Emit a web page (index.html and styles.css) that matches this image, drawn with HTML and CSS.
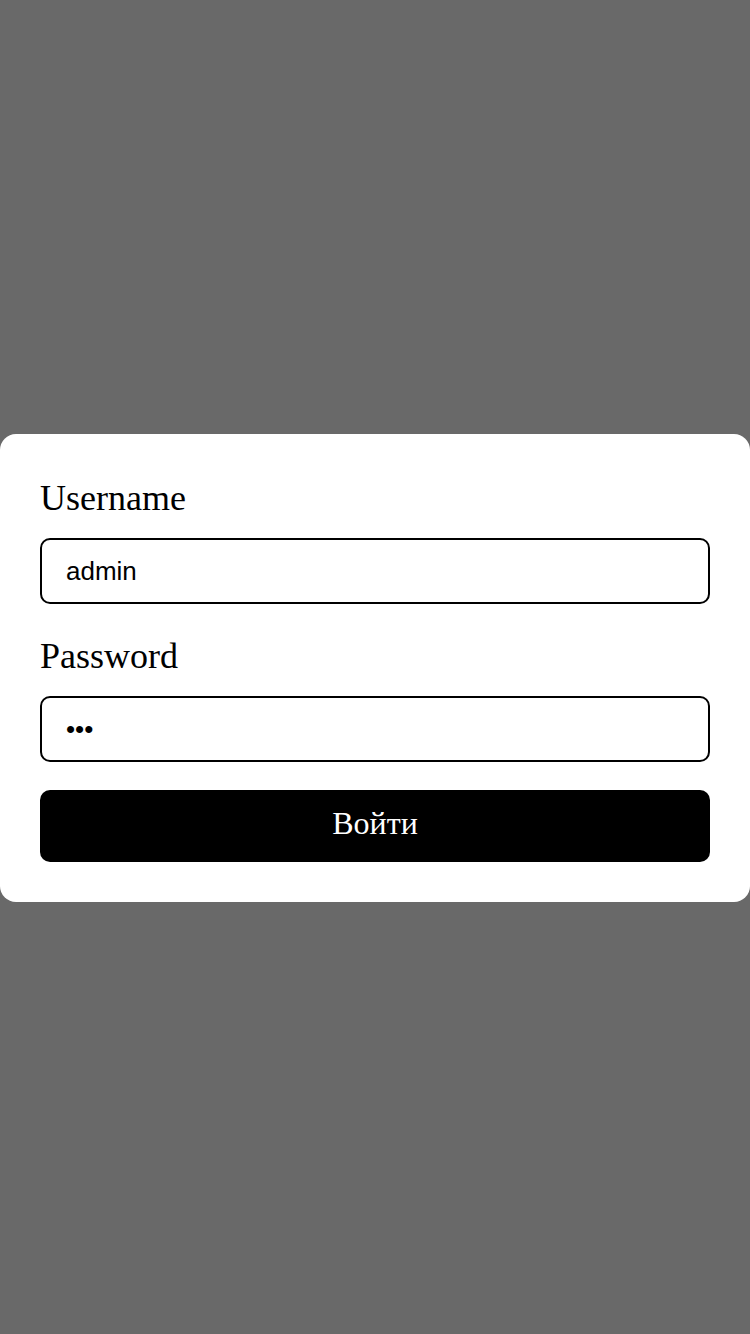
FILE: index.html
```html
<!DOCTYPE html>
<html lang="ru">
<head>
<meta charset="utf-8">
<title>Login</title>
<link rel="stylesheet" href="styles.css">
</head>
<body>
<div class="screen">
  <form class="card">
    <label class="label" for="u">Username</label>
    <input class="field" id="u" type="text" value="admin">
    <label class="label label-second" for="p">Password</label>
    <input class="field" id="p" type="password" value="123">
    <button class="btn" type="button">Войти</button>
  </form>
</div>
</body>
</html>
```

FILE: styles.css
```css
html, body {
  margin: 0;
  padding: 0;
  height: 100%;
}
body {
  background: #696969;
  font-family: "Liberation Serif", "Times New Roman", serif;
}
.screen {
  box-sizing: border-box;
  height: 1334px;
  padding-top: 2px;
  display: flex;
  align-items: center;
}
.card {
  box-sizing: border-box;
  width: 750px;
  background: #fff;
  border-radius: 16px;
  padding: 44px 40px 40px;
  display: flex;
  flex-direction: column;
}
.label {
  font-size: 36px;
  line-height: 40px;
  color: #000;
  margin-bottom: 20px;
}
.label-second {
  margin-top: 32px;
}
.field {
  box-sizing: border-box;
  height: 66px;
  width: 100%;
  border: 2px solid #000;
  border-radius: 10px;
  padding: 0 24px;
  font-family: "Liberation Sans", Arial, sans-serif;
  font-size: 26px;
  color: #000;
  background: #fff;
  outline: none;
}
.btn {
  margin-top: 28px;
  height: 72px;
  width: 100%;
  border: none;
  border-radius: 10px;
  background: #000;
  color: #fff;
  font-family: "Liberation Serif", "Times New Roman", serif;
  font-size: 32px;
  padding: 0 0 6px;
}
```
